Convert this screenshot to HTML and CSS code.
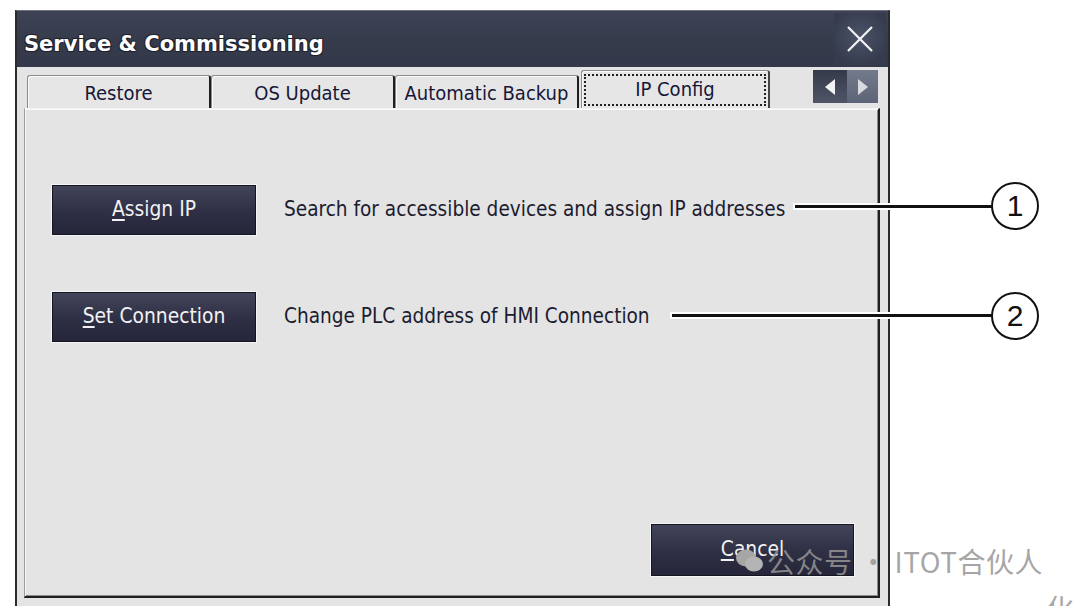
FILE: index.html
```html
<!DOCTYPE html>
<html lang="en">
<head>
  <meta charset="UTF-8">
  <title>Service &amp; Commissioning</title>
  <link rel="stylesheet" href="styles.css">
</head>
<body>
  <div class="stage">
    <div class="window">
      <div class="titlebar">
        <span class="title">Service &amp; Commissioning</span>
        <div class="close">
          <svg width="28" height="28" viewBox="0 0 28 28"><path d="M2 2 L26 26 M26 2 L2 26" stroke="#f4f4f6" stroke-width="2.2" fill="none"/></svg>
        </div>
      </div>

      <div class="tabbar">
        <div class="tab">Restore</div>
        <div class="tab">OS Update</div>
        <div class="tab">Automatic Backup</div>
        <div class="tab active"><span class="focus">IP Config</span></div>
        <div class="arrows">
          <div class="arrow left">
            <svg width="14" height="18" viewBox="0 0 14 18"><path d="M12 1 L2 9 L12 17 Z" fill="#f4f4f4"/></svg>
          </div>
          <div class="arrow right">
            <svg width="14" height="18" viewBox="0 0 14 18"><path d="M2 1 L12 9 L2 17 Z" fill="#d8dae0"/></svg>
          </div>
        </div>
      </div>

      <div class="panel">
        <div class="row">
          <button class="btn"><u>A</u>ssign IP</button>
          <span class="desc">Search for accessible devices and assign IP addresses</span>
        </div>
        <div class="row">
          <button class="btn"><u>S</u>et Connection</button>
          <span class="desc">Change PLC address of HMI Connection</span>
        </div>
        <button class="btn cancel"><u>C</u>ancel</button>
      </div>
    </div>

    <!-- callouts -->
    <div class="leader one"></div>
    <div class="badge one">1</div>
    <div class="leader two"></div>
    <div class="badge two">2</div>

    <div class="watermark">
      <svg width="30" height="26" viewBox="0 0 30 26"><ellipse cx="11" cy="10" rx="10" ry="8.5" fill="#a6a6a6"/><ellipse cx="19" cy="16" rx="9" ry="7.5" fill="#b4b4b4"/></svg>
      <span>公众号 · ITOT合伙人</span>
    </div>
    <div class="stray">化</div>
  </div>
</body>
</html>
```

FILE: styles.css
```css
body { margin: 0; background: #fff; font-family: "DejaVu Sans Condensed", "DejaVu Sans", sans-serif; }
.stage { position: relative; width: 1080px; height: 606px; overflow: hidden; padding-top: 10px; box-sizing: border-box; }

.window { margin-left: 15px; width: 875px; height: 620px; box-sizing: border-box; background: #e4e4e4; border-left: 2px solid #2b2b2b; border-right: 2px solid #2b2b2b; border-top: 1px solid #6d7080; display: flex; flex-direction: column; }

.titlebar { height: 56px; display: flex; align-items: center; justify-content: space-between; padding-left: 7px; background: linear-gradient(#3d4254, #363b4c 60%, #33384a); }
.title { color: #fff; font-family: "DejaVu Sans", sans-serif; font-weight: bold; font-size: 21px; text-shadow: 1px 1px 0 #20232e, -1px -1px 0 #20232e, 1px -1px 0 #20232e, -1px 1px 0 #20232e; margin-top: 10px; }
.close { width: 52px; height: 52px; margin-right: 2px; display: flex; align-items: center; justify-content: center; background: radial-gradient(circle at 50% 45%, #4c5367, #363c4e 75%); }

.tabbar { height: 41px; display: flex; align-items: flex-end; padding-left: 10px; background: #e4e4e4; }
.tab { width: 184px; height: 33px; box-sizing: border-box; border-top: 1px solid #8c8c8c; border-left: 1px solid #8c8c8c; border-right: 2px solid #1e1e1e; border-radius: 3px 3px 0 0; box-shadow: inset 1px 1px 0 #fafafa; display: flex; align-items: center; justify-content: center; font-size: 20px; color: #161638; background: #e6e6e6; padding-top: 1px; }
.tab.active { width: 189px; height: 38px; margin-left: 2px; border-right-color: #444; padding: 3px 2px 2px; align-items: stretch; }
.focus { flex: 1; border: 2px dotted #222; display: flex; align-items: center; justify-content: center; padding-bottom: 2px; }
.arrows { margin-left: auto; margin-right: 10px; align-self: flex-start; margin-top: 3px; display: flex; height: 33px; }
.arrow { display: flex; align-items: center; justify-content: center; }
.arrow.left { background: linear-gradient(#353a4b, #4f5567); width: 34px; }
.arrow.right { background: linear-gradient(#737a8c, #5d6477); width: 31px; }

.panel { flex: 1; margin: 0 8px 13px 7px; background: #e4e4e4; border-top: 1px solid #f4f4f4; border-left: 1px solid #9a9a9a; border-right: 2px solid #1f1f1f; border-bottom: 2px solid #1f1f1f; box-shadow: inset 1px 1px 0 #fafafa, inset -1px -1px 0 #8a8a8a; padding: 76px 0 20px 27px; display: flex; flex-direction: column; max-height: 490px; box-sizing: border-box; }
.row { display: flex; align-items: center; gap: 28px; margin-bottom: 57px; }
.btn { width: 204px; height: 50px; font-family: inherit; font-size: 20.8px; color: #f2f2f4; border: 1px solid #15151f; outline: 1px solid #f6f6f6; background: linear-gradient(#424459, #2e2f44 55%, #25263a); padding: 0 0 3px; }
.btn u { text-underline-offset: 3px; }
.desc { font-size: 20.6px; color: #1c1c30; margin-top: -3px; }
.cancel { margin-top: auto; align-self: flex-end; margin-right: 24px; width: 203px; height: 52px; }

.leader { position: absolute; height: 3px; background: #111; box-shadow: 0 0 0 2px #fff; }
.leader.one { left: 795px; width: 197px; top: 205px; }
.leader.two { left: 672px; width: 320px; top: 314px; }
.badge { position: absolute; width: 44px; height: 44px; border: 2.5px solid #111; border-radius: 50%; background: #fff; display: flex; align-items: center; justify-content: center; font-family: "Liberation Sans", sans-serif; font-size: 30px; color: #111; }
.badge.one { left: 991px; top: 182px; }
.badge.two { left: 991px; top: 292px; }

.watermark { position: absolute; left: 735px; top: 541px; display: flex; align-items: center; gap: 2px; font-family: "Noto Sans CJK SC", sans-serif; font-size: 28px; color: rgba(150, 150, 150, 0.85); letter-spacing: 0.5px; }
.stray { position: absolute; left: 1046px; top: 588px; font-family: "Noto Sans CJK SC", sans-serif; font-size: 28px; color: #a8a8a8; }
```
